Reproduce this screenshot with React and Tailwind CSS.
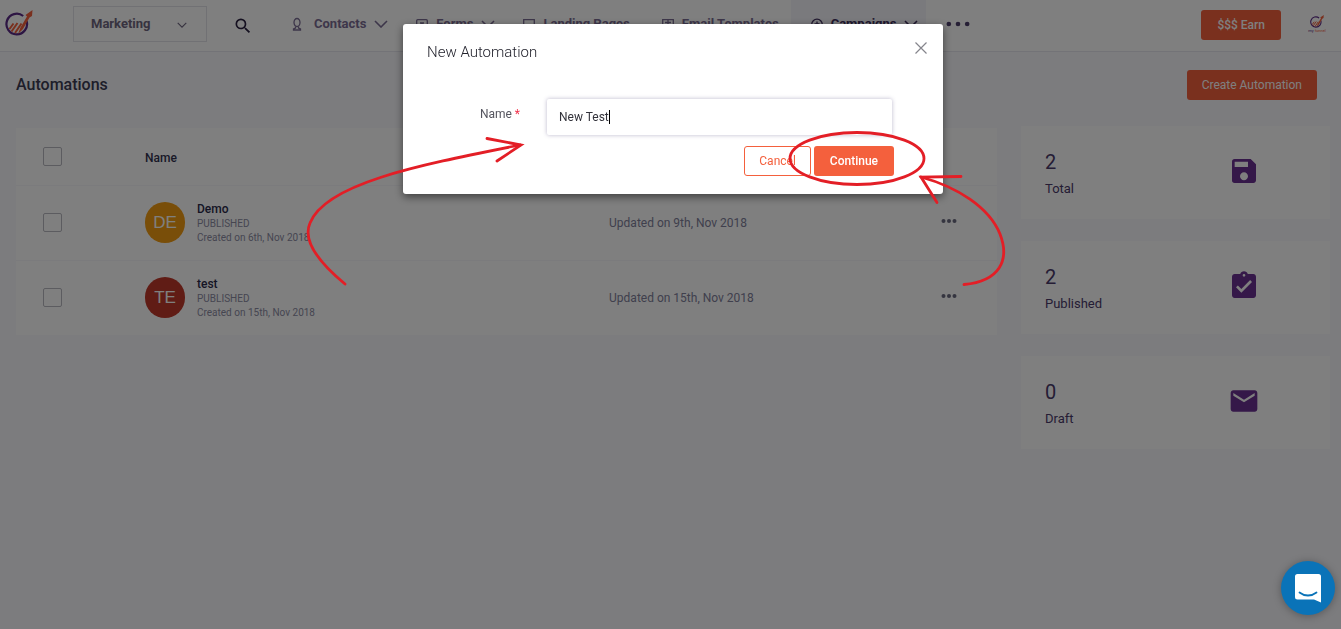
import { useState } from 'react';
import { MdSave, MdAssignmentTurnedIn, MdEmail, MdSearch } from 'react-icons/md';

const navItems = [
  { label: 'Contacts', icon: 'contacts', hasMenu: true },
  { label: 'Forms', icon: 'forms', hasMenu: true },
  { label: 'Landing Pages', icon: 'pages' },
  { label: 'Email Templates', icon: 'templates' },
  { label: 'Campaigns', icon: 'campaigns', hasMenu: true, active: true },
];

const automations = [
  { id: 1, initials: 'DE', name: 'Demo', color: 'bg-[#f39c12]', created: '6th, Nov 2018', updated: '9th, Nov 2018' },
  { id: 2, initials: 'TE', name: 'test', color: 'bg-[#c0392b]', created: '15th, Nov 2018', updated: '15th, Nov 2018' },
];

const stats = [
  { label: 'Total', value: 2, Icon: MdSave },
  { label: 'Published', value: 2, Icon: MdAssignmentTurnedIn },
  { label: 'Draft', value: 0, Icon: MdEmail },
];

function Logo({ className }) {
  return (
    <svg viewBox="0 0 28 28" className={className} fill="none">
      <path d="M18.200 6A10.300 10.300 0 1 0 21.600 11" stroke="#5b2a86" strokeWidth="2.200" />
      <path d="M4.500 19 8.500 13.500M6.500 21.500 12.500 13M10 23 16.500 13.500" stroke="#f4603d" strokeWidth="2" />
      <path d="M13 24 15.500 17.500 22 6.500 20.500 5 27.500 0 27 6 24.500 7.500 18 19Z" fill="#f4603d" />
    </svg>
  );
}

function Chevron({ className }) {
  return (
    <svg viewBox="0 0 14 8" className={className} fill="none" stroke="currentColor" strokeWidth="1.6">
      <path d="M1 1l6 6 6-6" />
    </svg>
  );
}

function NavIcon({ name }) {
  return (
    <svg viewBox="0 0 12 14" className="h-3.5 w-3 shrink-0 overflow-visible" fill="none" stroke="currentColor" strokeWidth="1.3">
      {name === 'contacts' && (
        <>
          <ellipse cx="3" cy="5.500" rx="3" ry="4" />
          <path d="M1.500 9.500v1.500L-.5 12v1h7v-1l-2-1V9.500" />
        </>
      )}
      {name === 'forms' && (
        <>
          <rect x=".7" y="2.700" width="10.600" height="10" rx="1" />
          <path d="M4 6h4M6 6v4" />
        </>
      )}
      {name === 'pages' && <path d="M.7 2.700h10.600v8H.7zM3 13h6" />}
      {name === 'templates' && <path d="M.7 2.700h10.600v9H.7zM6 2.700v9M3 5.500h6" />}
      {name === 'campaigns' && (
        <>
          <circle cx="6" cy="7.500" r="5.300" />
          <path d="M6 4.500v6M3.500 7h5" />
        </>
      )}
    </svg>
  );
}

function Dots({ className, r = 2 }) {
  return (
    <svg viewBox="0 0 16 6" className={className} fill="currentColor">
      <circle cx="2.500" cy="3" r={r} />
      <circle cx="8" cy="3" r={r} />
      <circle cx="13.500" cy="3" r={r} />
    </svg>
  );
}

function Header() {
  return (
    <header className="flex h-[52px] items-center border-b border-[#e6e6ee] bg-white pr-3">
      <a href="#home" aria-label="Home" className="ml-[5px] mr-10 shrink-0 pb-1">
        <Logo className="h-7 w-7" />
      </a>
      <div className="relative mb-1 w-[134px] shrink-0">
        <select
          aria-label="Workspace"
          className="h-9 w-full appearance-none border border-[#e2e2e8] bg-white pl-[17px] text-[13px] font-bold text-[#6f6680]"
        >
          <option>Marketing</option>
        </select>
        <Chevron className="pointer-events-none absolute right-5 top-4 h-1.5 w-2.5 text-[#6f6680]" />
      </div>
      <button type="button" aria-label="Search" className="ml-[26px] mr-[21px] shrink-0 text-[#2a2140]">
        <MdSearch className="h-5 w-5" stroke="currentColor" />
      </button>
      <nav className="flex h-full text-[13px] font-bold text-[#7b6d94]">
        {navItems.map((item) => (
          <a
            key={item.label}
            href={`#${item.icon}`}
            className={`flex items-center gap-2 whitespace-nowrap pb-1 pl-5 ${item.hasMenu ? 'pr-2' : 'pr-3'} ${
              item.active ? 'bg-[#f5f4fa] text-[#40305e]' : ''
            }`}
          >
            <NavIcon name={item.icon} />
            {item.label}
            {item.hasMenu && <Chevron className="h-2 w-3.5" />}
          </a>
        ))}
      </nav>
      <button type="button" aria-label="More" className="ml-[18px] pb-1 text-[#4d3f6b]">
        <Dots className="h-2.5 w-7" r={1.4} />
      </button>
      <button type="button" className="mb-0.5 ml-auto h-[30px] rounded-[3px] bg-[#f4603d] px-4 text-[12px] font-medium text-white">
        $$$ Earn
      </button>
      <a href="#account" aria-label="Account" className="ml-6 flex w-6 flex-col items-center pb-1">
        <Logo className="h-3.5 w-3.5" />
        <span className="text-[4px] leading-[4px] text-[#5b2a86]">
          my <span className="text-[#f4603d]">funnel</span>
        </span>
      </a>
    </header>
  );
}

function AutomationTable() {
  const boxClass = 'ml-[27px] block h-[19px] w-[19px] appearance-none rounded-[2px] border border-[#b9b9c0]';
  return (
    <table className="w-full table-fixed bg-white text-left text-[12px]">
      <thead>
        <tr className="h-[57px] border-b border-[#f7f7fa]">
          <th className="w-32">
            <input type="checkbox" aria-label="Select all" className={boxClass} />
          </th>
          <th className="w-[47%] pl-px pt-1 font-medium text-[#33334f]">Name</th>
          <th aria-label="Updated" />
          <th aria-label="Actions" className="w-14" />
        </tr>
      </thead>
      <tbody>
        {automations.map((item) => (
          <tr key={item.id} className="h-[75px] border-b border-[#f7f7fa] last:border-0">
            <td>
              <input type="checkbox" aria-label={`Select ${item.name}`} className={boxClass} />
            </td>
            <td>
              <div className="flex items-center gap-3 pl-px">
                <span
                  className={`flex h-[41px] w-10 items-center justify-center rounded-full font-['Liberation_Sans',sans-serif] text-[17px] text-white ${item.color}`}
                >
                  {item.initials}
                </span>
                <div className="text-[10px] leading-[14px] text-[#8c8ca3]">
                  <p className="text-[12px] font-medium leading-4 text-[#2b2b4a]">{item.name}</p>
                  <p>PUBLISHED</p>
                  <p>Created on {item.created}</p>
                </div>
              </div>
            </td>
            <td className="pl-1 text-[#80809a]">Updated on {item.updated}</td>
            <td>
              <button type="button" aria-label="Row actions" className="block pb-1 text-[#6a6a80]">
                <Dots className="h-1.5 w-4" />
              </button>
            </td>
          </tr>
        ))}
      </tbody>
    </table>
  );
}

function NewAutomationModal() {
  const [name, setName] = useState('New Test');

  return (
    <div className="fixed inset-0 flex items-start justify-center bg-black/50 pl-[5px] pt-6">
      <div
        role="dialog"
        aria-labelledby="modal-title"
        className="w-[540px] rounded-[3px] bg-white px-6 pb-[18px] pt-4 shadow-[0_3px_8px_rgba(0,0,0,0.5)]"
      >
        <div className="flex items-center justify-between">
          <h2 id="modal-title" className="text-[15px] leading-6 font-light text-[#22222c]">
            New Automation
          </h2>
          <button type="button" aria-label="Close" className="-mr-2 text-[#85858c]">
            <svg viewBox="0 0 12 12" className="-mt-2 h-3 w-3" fill="none" stroke="currentColor" strokeWidth="1.200">
              <path d="M.5.5l11 11M11.500.5l-11 11" />
            </svg>
          </button>
        </div>
        <div className="mt-[35px] flex items-center pr-[27px]">
          <label htmlFor="automation-name" className="w-[93px] pb-1.5 text-right text-[12px] text-[#55555f]">
            Name <span className="text-[#f0324b]">*</span>
          </label>
          <div className="relative ml-[27px] min-w-0 flex-1">
            <input
              id="automation-name"
              value={name}
              onChange={(e) => setName(e.target.value)}
              className="block h-9 w-full rounded-[2px] bg-white px-3 text-[12px] text-[#33333b] caret-transparent shadow-[0_0_4px_rgba(60,50,110,0.35)] outline-none"
            />
            {/* steady caret after the typed text */}
            <span className="pointer-events-none absolute inset-y-0 left-3 flex items-center text-[12px]">
              <span className="invisible whitespace-pre">{name}</span>
              <span className="h-3.5 w-px bg-black" />
            </span>
          </div>
        </div>
        <div className="mt-[11px] flex justify-end gap-[3px] pr-[25px] text-[12px]">
          <button type="button" className="h-[30px] rounded-[3px] border border-[#f4603d] px-3.5 text-[#f4603d]">
            Cancel
          </button>
          <button type="button" className="h-[30px] rounded-[3px] bg-[#f4603d] px-4 font-medium text-white">
            Continue
          </button>
        </div>
      </div>
    </div>
  );
}

// Hand-drawn hints pointing at the name field and the Continue button
function Hints() {
  return (
    <svg
      viewBox="0 0 1341 629"
      className="pointer-events-none absolute left-0 top-0 w-full"
      fill="none"
      stroke="#e31e26"
      strokeWidth="2.800"
      strokeLinecap="round"
    >
      <path d="M345 284C316 260 303 239 310 223C326 183 420 165 520 145" />
      <path d="M487 138.500 521 145 497 161" />
      <ellipse cx="857" cy="158.500" rx="67" ry="26" />
      <path d="M964 284.500C1000 281 1010 260 1000 234C989 207 957 187 921 177" />
      <path d="M961 176.500 921 177 937 202.500" />
    </svg>
  );
}

export default function App() {
  return (
    <div className="relative min-h-screen bg-[#f9f9fc] font-[Roboto,sans-serif]">
      <Header />
      <main className="pl-4 pr-[11px]">
        <div className="flex items-center justify-between pb-[26px] pr-[13px] pt-[18px]">
          <h1 className="text-[16px] font-medium text-[#3c3c54]">Automations</h1>
          <button type="button" className="h-[30px] rounded-[3px] bg-[#f4603d] px-[15px] text-[12px] text-white">
            Create Automation
          </button>
        </div>
        <div className="flex items-start gap-6">
          <section className="min-w-0 flex-1 pt-0.5">
            <AutomationTable />
          </section>
          <aside className="flex w-[309px] flex-col gap-[22px]">
            {stats.map(({ label, value, Icon }) => (
              <div key={label} className="flex h-[93px] items-center bg-white pl-6 text-[#4a3a6b]">
                <div className="flex-1 pt-1">
                  <p className="text-[20px] leading-7">{value}</p>
                  <p className="text-[13px] leading-[26px]">{label}</p>
                </div>
                <Icon className="mb-1 mr-[70px] h-8 w-8 text-[#6a3093]" />
              </div>
            ))}
          </aside>
        </div>
      </main>
      <NewAutomationModal />
      <Hints />
      <button
        type="button"
        aria-label="Open chat"
        className="fixed bottom-3.5 right-1.5 flex h-[54px] w-[54px] items-center justify-center rounded-full bg-[#0a73b8] shadow-[0_1px_8px_rgba(0,0,0,0.3)]"
      >
        <svg viewBox="0 0 26 29" className="h-[29px] w-[26px]">
          <path d="M2.500 0h21A2.500 2.500 0 0 1 26 2.500V28.500L19 25.500H2.500A2.500 2.500 0 0 1 0 23V2.500A2.500 2.500 0 0 1 2.500 0Z" fill="#fff" />
          <path d="M4.500 18.500c5 4 12 4 17 0" fill="none" stroke="#0a73b8" strokeWidth="1.800" strokeLinecap="round" />
        </svg>
      </button>
    </div>
  );
}
